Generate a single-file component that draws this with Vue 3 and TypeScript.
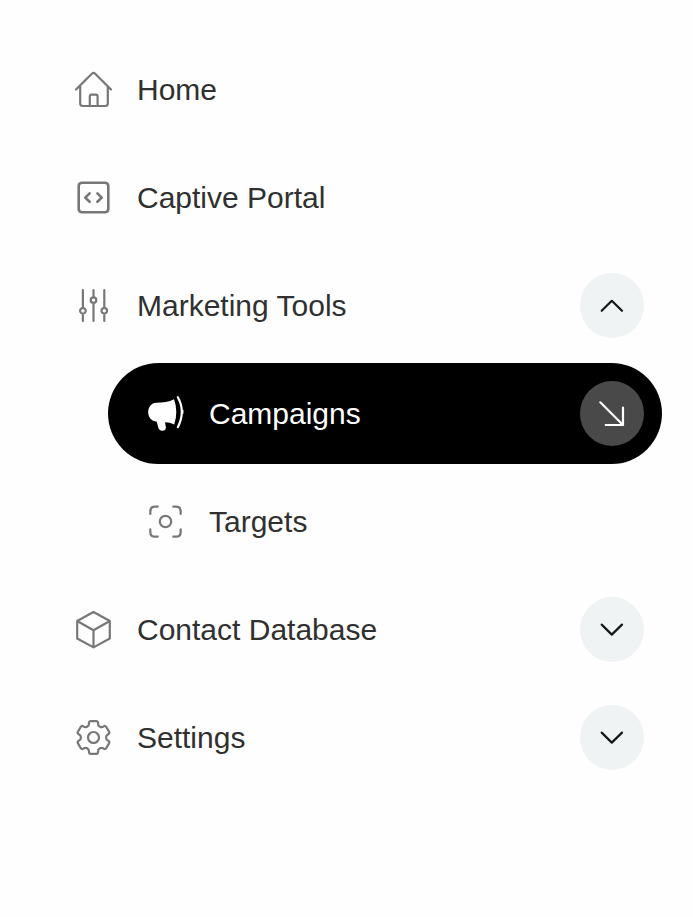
<script setup lang="ts">
import { ref } from 'vue'

type IconName = 'home' | 'code' | 'sliders' | 'megaphone' | 'target' | 'cube' | 'gear'

interface NavItem {
  label: string
  icon: IconName
  children?: NavItem[]
  expandable?: boolean
}

const items: NavItem[] = [
  { label: 'Home', icon: 'home' },
  { label: 'Captive Portal', icon: 'code' },
  {
    label: 'Marketing Tools',
    icon: 'sliders',
    expandable: true,
    children: [
      { label: 'Campaigns', icon: 'megaphone' },
      { label: 'Targets', icon: 'target' },
    ],
  },
  { label: 'Contact Database', icon: 'cube', expandable: true },
  { label: 'Settings', icon: 'gear', expandable: true },
]

const active = ref('Campaigns')
const open = ref<Record<string, boolean>>({ 'Marketing Tools': true })

function toggle(label: string): void {
  open.value[label] = !open.value[label]
}

// Outline of a six-toothed gear with softened corners.
function gearPath(cx: number, cy: number): string {
  const points: [number, number][] = []
  for (let tooth = 0; tooth < 6; tooth++) {
    for (const [offset, radius] of [[-20, 12.8], [-16, 17], [16, 17], [20, 12.8]]) {
      const angle = ((tooth * 60 - 90 + offset) * Math.PI) / 180
      points.push([cx + radius * Math.cos(angle), cy + radius * Math.sin(angle)])
    }
  }
  const toward = (a: [number, number], b: [number, number]): string => {
    const length = Math.hypot(b[0] - a[0], b[1] - a[1])
    const t = Math.min(2, length / 2) / length
    return `${(a[0] + (b[0] - a[0]) * t).toFixed(2)} ${(a[1] + (b[1] - a[1]) * t).toFixed(2)}`
  }
  const parts = points.map((point, i) => {
    const previous = points[(i + points.length - 1) % points.length]
    const next = points[(i + 1) % points.length]
    return `${i ? 'L' : 'M'}${toward(point, previous)}Q${point[0].toFixed(2)} ${point[1].toFixed(2)} ${toward(point, next)}`
  })
  return parts.join('') + 'Z'
}

const strokes: Record<IconName, string> = {
  home: 'M3 20.5 18.8 4.7Q20.5 3.2 22.2 4.7L38 20.5M7.2 17V34.5Q7.2 37 9.7 37H32.3Q34.8 37 34.8 34.5V17M16.8 37V27.5Q16.8 25.7 18.6 25.7H22.8Q24.6 25.7 24.6 27.5V37',
  code: 'M9.2 5.7H31.8Q35.3 5.7 35.3 9.2V31.8Q35.3 35.3 31.8 35.3H9.2Q5.7 35.3 5.7 31.8V9.2Q5.7 5.7 9.2 5.7ZM16.6 16.4 12.3 20.6 16.6 24.8M24.4 16.4 28.7 20.6 24.4 24.8',
  sliders:
    'M9.9 5V23M9.9 28.6V36M20.5 5V12.3M20.5 17.9V36M31.3 5V23M31.3 28.6V36M7.1 25.8a2.8 2.8 0 1 0 5.6 0a2.8 2.8 0 1 0-5.6 0M17.7 15.1a2.8 2.8 0 1 0 5.6 0a2.8 2.8 0 1 0-5.6 0M28.5 25.8a2.8 2.8 0 1 0 5.6 0a2.8 2.8 0 1 0-5.6 0',
  megaphone: 'M32.8 4.2Q36.8 11 36.8 18.8T32.8 34.2M37.4 17.5V20',
  target:
    'M5.3 13V10.5Q5.3 5.7 10.1 5.7H12.7M28.3 5.7H30.9Q35.7 5.7 35.7 10.5V13M35.7 28.3V30.9Q35.7 35.7 30.9 35.7H28.3M12.7 35.7H10.1Q5.3 35.7 5.3 30.9V28.3M14.8 20.5a5.7 5.7 0 1 0 11.4 0a5.7 5.7 0 1 0-11.4 0',
  cube: 'M20.5 3 36.8 12V29.5L20.5 38.4 4.2 29.5V12ZM4.2 12 20.5 21.2 36.8 12M20.5 21.2V38.4',
  gear: gearPath(20.5, 20.5) + 'M15 20.5a5.5 5.5 0 1 0 11 0a5.5 5.5 0 1 0-11 0',
}
const megaphoneBody =
  'M11 9.7C18 9.7 24 8.8 29 6.2Q31.3 12 31.3 18.8T29.2 31.4Q25 29.2 20 29.2L20.9 34.2Q21 37.7 17.2 37.7Q14.3 37.7 13.4 34.8L11.6 28.5C6.5 28.5 3.2 24 3.2 19.2C3.2 14 6.6 9.7 11 9.7Z'
</script>

<template>
  <nav class="sidebar" aria-label="Main">
    <ul class="list">
      <li v-for="item in items" :key="item.label" class="entry">
        <div class="row">
          <a class="link" href="#" @click.prevent="active = item.label">
            <svg class="icon" :class="item.icon" viewBox="0 0 40 41" aria-hidden="true">
              <path :d="strokes[item.icon]" />
            </svg>
            <span>{{ item.label }}</span>
          </a>
          <button
            v-if="item.expandable"
            class="round"
            type="button"
            :aria-label="'Toggle ' + item.label"
            :aria-expanded="!!open[item.label]"
            @click="toggle(item.label)"
          >
            <svg class="glyph" viewBox="0 0 64 65" aria-hidden="true">
              <path :d="open[item.label] ? 'M21.7 37.8 31.8 27.8 42 37.8' : 'M21.7 27.6 31.8 37.6 42 27.6'" />
            </svg>
          </button>
        </div>
        <ul v-if="item.children && open[item.label]" class="list sub">
          <li v-for="child in item.children" :key="child.label">
            <a
              class="row link"
              :class="{ active: active === child.label }"
              href="#"
              @click.prevent="active = child.label"
            >
              <svg class="icon" :class="child.icon" viewBox="0 0 40 41" aria-hidden="true">
                <path v-if="child.icon === 'megaphone'" class="solid" :d="megaphoneBody" />
                <path :d="strokes[child.icon]" />
              </svg>
              <span>{{ child.label }}</span>
              <span v-if="active === child.label" class="round badge">
                <svg class="glyph" viewBox="0 0 64 65" aria-hidden="true">
                  <path d="M20.3 21.3 43 44M43 26.7V44H25.7" />
                </svg>
              </span>
            </a>
          </li>
        </ul>
      </li>
    </ul>
  </nav>
</template>

<style>
body {
  margin: 0;
  background: #fefefe;
}
</style>

<style scoped>
.sidebar {
  padding: 39px 31px 39px 36px;
  font-family: 'Liberation Sans', Arial, sans-serif;
  font-size: 30px;
  line-height: 36px;
  color: #303030;
}

.list {
  display: flex;
  flex-direction: column;
  gap: 7px;
  margin: 0;
  padding: 0;
  list-style: none;
}

.list.sub {
  margin-top: 7px;
  padding-left: 72px;
}

.row {
  display: flex;
  align-items: center;
  box-sizing: border-box;
  height: 101px;
  padding: 0 18px 0 37px;
  border-radius: 51px;
}

.link {
  display: flex;
  flex: 1;
  align-items: center;
  gap: 24px;
  color: inherit;
  text-decoration: none;
}

.link.active {
  background: #000;
  color: #fff;
}

.icon {
  flex: none;
  width: 40px;
  height: 41px;
  fill: none;
  stroke: #777;
  stroke-width: 2.2;
  stroke-linecap: round;
  stroke-linejoin: round;
}

.icon.code {
  stroke-width: 2.6;
}

.active .icon {
  stroke: #fff;
}

.icon .solid {
  fill: #777;
  stroke: none;
}

.active .icon .solid {
  fill: #fff;
}

.round {
  flex: none;
  width: 64px;
  height: 65px;
  margin-left: auto;
  padding: 0;
  border: 0;
  border-radius: 50%;
  background: #eff3f4;
  color: #17171b;
  cursor: pointer;
}

.badge {
  background: #494949;
  color: #fff;
}

.glyph {
  display: block;
  width: 64px;
  height: 65px;
  fill: none;
  stroke: currentColor;
  stroke-width: 2.2;
  stroke-linecap: round;
  stroke-linejoin: round;
}
</style>
